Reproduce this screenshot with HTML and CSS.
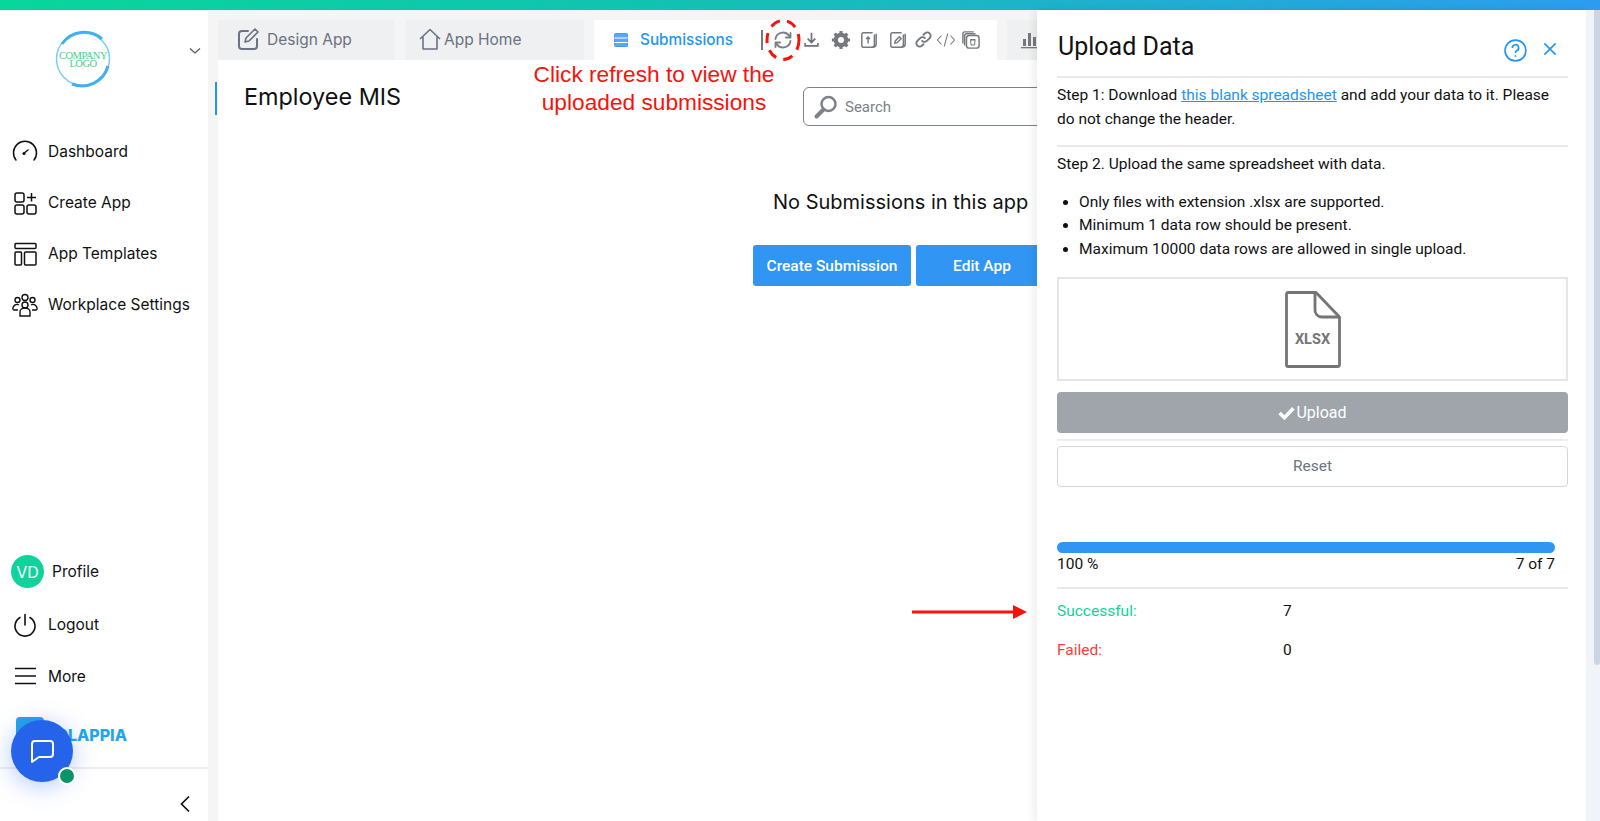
FILE: index.html
```html
<!DOCTYPE html>
<html lang="en">
<head>
<meta charset="utf-8">
<title>Employee MIS</title>
<link rel="stylesheet" href="styles.css">
</head>
<body>
<div class="topbar"></div>
<div class="shell">
  <aside class="sidebar">
    <div class="brand">
      <div class="logo">
        <svg width="58" height="58" viewBox="0 0 58 58"><circle cx="29" cy="29" r="26.500" fill="none" stroke="#7ccbf7" stroke-width="1.500"/><path d="M8 14A27 27 0 0 1 48 9M54 36A27 27 0 0 1 18 54" fill="none" stroke="#3fb0f2" stroke-width="3"/></svg>
        <span class="logo-text">COMPANY<br>LOGO</span>
      </div>
      <svg class="brand-caret" width="14" height="8" viewBox="0 0 14 8"><path d="M2 1.500L7 6L12 1.500" fill="none" stroke="#555" stroke-width="1.200"/></svg>
    </div>
    <nav class="nav">
      <a class="nav-item"><svg width="26" height="26" viewBox="0 0 26 26"><path d="M4 21A11.500 11.500 0 1 1 22 21M11.500 14.500L16 11" fill="none" stroke="#111" stroke-width="1.500" stroke-linecap="round"/><circle cx="12" cy="14.500" r="1.500" fill="#111"/></svg>Dashboard</a>
      <a class="nav-item"><svg width="26" height="26" viewBox="0 0 26 26" fill="none" stroke="#111" stroke-width="1.500"><rect x="3" y="3" width="9" height="9" rx="2"/><rect x="3" y="15" width="9" height="9" rx="2"/><rect x="15" y="15" width="9" height="9" rx="2"/><path d="M19.500 3V11.500M15 7.500H24"/></svg>Create App</a>
      <a class="nav-item"><svg width="26" height="26" viewBox="0 0 26 26" fill="none" stroke="#111" stroke-width="1.500"><rect x="3" y="2.500" width="21" height="5" rx="1"/><rect x="3" y="11" width="6.500" height="13" rx="1"/><rect x="12.500" y="11" width="11.500" height="13" rx="1"/></svg>App Templates</a>
      <a class="nav-item"><svg width="26" height="26" viewBox="0 0 26 26" fill="none" stroke="#111" stroke-width="1.400"><circle cx="13" cy="5.500" r="3"/><circle cx="5.500" cy="8" r="2.500"/><circle cx="20.500" cy="8" r="2.500"/><circle cx="13" cy="13" r="3"/><path d="M8 24V20a5 4 0 0 1 10 0V24ZM6 18H2a1 1 0 0 1-1-1 4 4 0 0 1 6-4M20 18H24a1 1 0 0 0 1-1 4 4 0 0 0-6-4"/></svg>Workplace Settings</a>
    </nav>
    <div class="side-bottom">
      <a class="nav-item profile"><span class="avatar">VD</span>Profile</a>
      <a class="nav-item logout"><svg width="26" height="26" viewBox="0 0 26 26" fill="none" stroke="#111" stroke-width="1.600" stroke-linecap="round"><path d="M13 2.500V13M8 5.500A10 10 0 1 0 18 5.500"/></svg>Logout</a>
      <a class="nav-item more"><svg width="26" height="26" viewBox="0 0 26 26" fill="none" stroke="#111" stroke-width="1.500"><path d="M3 5.500H24M3 13H24M3 20.500H24"/></svg>More</a>
      <div class="clappia"><span class="clappia-mark"></span><span class="clappia-word">CLAPPIA</span></div>
      <div class="collapse-row"><svg width="12" height="18" viewBox="0 0 12 18"><path d="M10 1.500L2.500 9L10 16.500" fill="none" stroke="#111" stroke-width="1.700"/></svg></div>
    </div>
  </aside>

  <main class="main">
    <div class="tabs">
      <div class="tab tab-off tab-design"><svg width="24" height="24" viewBox="0 0 24 24" fill="none" stroke="#6b7280" stroke-width="2" stroke-linecap="round" stroke-linejoin="round"><path d="M12 4H6a3 3 0 0 0-3 3V19a3 3 0 0 0 3 3H18a3 3 0 0 0 3-3V12"/><path d="M9 15L10 11L19 2L22 5L13 14Z" stroke-width="1.600"/></svg>Design App</div>
      <div class="tab tab-off tab-home"><svg width="24" height="24" viewBox="0 0 24 24" fill="none" stroke="#6b7280" stroke-width="1.600" stroke-linejoin="round"><path d="M2 12L12 2.500L22 12M5 10V22H19V10"/></svg>App Home</div>
      <div class="tab tab-on">
        <svg class="sub-icon" width="16" height="16" viewBox="0 0 16 16"><rect x="1.500" y="1.500" width="13" height="13" rx="1" fill="#5aa9f5" stroke="#3f9bf3"/><path d="M1 6H15M1 10.500H15" stroke="#fff" stroke-width="1"/></svg>
        <span class="tab-label">Submissions</span>
        <div class="tools">
          <span class="tool-sep"></span>
          <svg class="t-refresh" width="20" height="20" viewBox="0 0 24 24" fill="none" stroke="#7a7f85" stroke-width="2.200" stroke-linecap="round" stroke-linejoin="round"><path d="M3 11A9 9 0 0 1 19 6.500L21 9M21 3.500V9H15.500M21 13A9 9 0 0 1 5 17.500L3 15M3 20.500V15H8.500"/></svg>
          <svg class="t-dl" width="17" height="17" viewBox="0 0 20 20" fill="none" stroke="#6f7378" stroke-width="2"><path d="M10 2V13M5.500 9L10 13.500L14.500 9M2.500 14V17.500H17.500V14"/></svg>
          <svg class="t-gear" width="20" height="20" viewBox="0 0 22 22"><circle cx="11" cy="11" r="6" fill="none" stroke="#75797e" stroke-width="4"/><path d="M11 1V21M1 11H21M4 4L18 18M18 4L4 18" stroke="#75797e" stroke-width="3.400"/><circle cx="11" cy="11" r="3.300" fill="#fff"/></svg>
          <svg class="t-up" width="18" height="18" viewBox="0 0 20 20" fill="none" stroke="#74787d" stroke-width="1.600"><path d="M14 2H4A2 2 0 0 0 2 4V16A2 2 0 0 0 4 18H13A3 3 0 0 0 16 15V4M18 3V15A4 4 0 0 1 14 18"/><path d="M9 14V7M7 9L9 6.800L11 9"/></svg>
          <svg class="t-edit" width="18" height="18" viewBox="0 0 20 20" fill="none" stroke="#74787d" stroke-width="1.600"><path d="M14 2H4A2 2 0 0 0 2 4V16A2 2 0 0 0 4 18H13A3 3 0 0 0 16 15V4M18 3V15A4 4 0 0 1 14 18"/><path d="M6.500 13.500L7 11L11.500 6.500L13.500 8.500L9 13Z"/></svg>
          <svg class="t-link" width="19" height="19" viewBox="0 0 20 20" fill="none" stroke="#75797e" stroke-width="2" stroke-linecap="round"><path d="M8.500 11.500a3.500 3.500 0 0 0 5 0l3-3a3.500 3.500 0 0 0-5-5l-1.500 1.500M11.500 8.500a3.500 3.500 0 0 0-5 0l-3 3a3.500 3.500 0 0 0 5 5l1.500-1.500"/></svg>
          <svg class="t-code" width="20" height="18" viewBox="0 0 22 20" fill="none" stroke="#75797e" stroke-width="1.200"><path d="M6 5L1.500 10L6 15M16 5L20.500 10L16 15M13 3L9 17"/></svg>
          <svg class="t-trash" width="18" height="18" viewBox="0 0 20 20" fill="none" stroke="#74787d" stroke-width="1.600"><path d="M1 14V3A2 2 0 0 1 3 1H13"/><path d="M3 16V5A2 2 0 0 1 5 3H15"/><rect x="5" y="5" width="14" height="14" rx="3"/><path d="M9.500 10H14.500L14 15.500H10ZM9 9.500H15" stroke-width="1.100"/></svg>
        </div>
      </div>
      <div class="tab tab-off tab-chart"><svg width="18" height="18" viewBox="0 0 18 18" fill="#75797e"><rect x="2" y="8" width="3" height="7"/><rect x="7" y="2" width="3" height="13"/><rect x="12" y="6" width="3" height="9"/><rect x="0" y="16" width="18" height="1.300"/></svg></div>
    </div>

    <div class="page-head">
      <h1 class="app-title">Employee MIS</h1>
      <div class="search"><svg width="26" height="26" viewBox="0 0 26 26" fill="none" stroke="#7b8288"><circle cx="15.500" cy="10" r="7" stroke-width="2.500"/><path d="M10.500 15.500L3.500 22.500" stroke-width="4" stroke-linecap="round"/></svg><span>Search</span></div>
    </div>

    <div class="empty">
      <p class="empty-text">No Submissions in this app</p>
      <div class="empty-actions"><button class="btn-blue">Create Submission</button><button class="btn-blue btn-edit">Edit App</button></div>
    </div>
  </main>
</div>

<div class="note">Click refresh to view the<br>uploaded submissions</div>
<svg class="ring" width="36" height="42" viewBox="0 0 36 42"><ellipse cx="18" cy="21" rx="16" ry="19.500" fill="none" stroke="#f7130b" stroke-width="3" stroke-dasharray="10 7.500"/></svg>
<svg class="arrow" width="115" height="16" viewBox="0 0 115 16"><path d="M0 8H102" stroke="#f7130b" stroke-width="3"/><path d="M101 1L115 8L101 15Z" fill="#f7130b"/></svg>

<button class="chat"><svg width="28" height="28" viewBox="0 0 28 28" fill="none" stroke="#fff" stroke-width="2" stroke-linejoin="round"><path d="M7 4H22A3 3 0 0 1 25 7V17A3 3 0 0 1 22 20H11L4 25V7A3 3 0 0 1 7 4Z"/></svg><span class="chat-dot"></span></button>

<section class="drawer">
  <header class="drawer-head">
    <h2>Upload Data</h2>
    <div class="drawer-icons">
      <svg width="23" height="23" viewBox="0 0 22 22" fill="none" stroke="#2196f3" stroke-width="1.600"><circle cx="11" cy="11" r="10"/><path d="M8 8.500A3 3 0 1 1 12 11.300C11.200 11.800 11 12.300 11 13.300M11 15.500V17"/></svg>
      <svg class="icon-close" width="14" height="14" viewBox="0 0 15 15" fill="none" stroke="#2196f3" stroke-width="1.800"><path d="M1.500 1.500L13.500 13.500M13.500 1.500L1.500 13.500"/></svg>
    </div>
  </header>
  <div class="step step-1">Step 1: Download <a>this blank spreadsheet</a> and add your data to it. Please do not change the header.</div>
  <div class="step step-2">Step 2. Upload the same spreadsheet with data.</div>
  <ul class="rules">
    <li>Only files with extension .xlsx are supported.</li>
    <li>Minimum 1 data row should be present.</li>
    <li>Maximum 10000 data rows are allowed in single upload.</li>
  </ul>
  <div class="dropbox">
    <div class="file">
      <svg width="56" height="77" viewBox="0 0 56 77" fill="none" stroke="#757575" stroke-width="2.800" stroke-linejoin="round"><path d="M3 1.500H31L54.500 26V74A1.500 1.500 0 0 1 53 75.500H3A1.500 1.500 0 0 1 1.500 74V3A1.500 1.500 0 0 1 3 1.500Z"/><path d="M30 2V18A7 7 0 0 0 37 26H54"/></svg>
      <span class="file-ext">XLSX</span>
    </div>
  </div>
  <button class="btn-upload"><svg width="17" height="14" viewBox="0 0 16 13" fill="none" stroke="#fff" stroke-width="3.200"><path d="M1.500 6.500L6 11L14.500 2"/></svg>Upload</button>
  <div class="rule"></div>
  <button class="btn-reset">Reset</button>
  <div class="progress"></div>
  <div class="progress-labels"><span>100 %</span><span>7 of 7</span></div>
  <div class="result result-ok"><span class="result-key">Successful:</span><span>7</span></div>
  <div class="result result-bad"><span class="result-key">Failed:</span><span>0</span></div>
</section>
<div class="scrollbar"><div class="thumb"></div></div>
</body>
</html>
```

FILE: styles.css
```css
* { box-sizing: border-box; }
html, body { margin: 0; height: 821px; overflow: hidden; }
body { background: #f5f5f5; font-family: Inter, "Liberation Sans", sans-serif; color: #111; position: relative; }
h1, h2, p, ul { margin: 0; padding: 0; }
button { font: inherit; border: 0; padding: 0; }

.topbar { height: 10px; background: linear-gradient(90deg, #07d69a 0%, #14c0b4 45%, #2d9cf0 100%); }
.shell { display: flex; height: 811px; }

.sidebar { width: 208px; background: #fff; display: flex; flex-direction: column; flex: none; }
.brand { height: 102px; position: relative; padding: 20px 0 0 54px; }
.logo { width: 58px; height: 58px; position: relative; }
.logo svg { display: block; }
.logo-text { position: absolute; inset: 22px 0 0 0; text-align: center; font: 10.500px/8px "Liberation Serif", serif; color: #3fd08a; letter-spacing: -0.500px; }
.brand-caret { position: absolute; right: 6px; top: 37px; }
.nav { display: flex; flex-direction: column; padding-top: 14px; }
.nav-item { height: 51px; display: flex; align-items: center; gap: 10px; padding-left: 12px; font-size: 15.500px; color: #111; }
.side-bottom { margin-top: auto; display: flex; flex-direction: column; }
.profile { gap: 8px; padding-left: 11px; height: 52px; padding-bottom: 1px; }
.avatar { width: 33px; height: 33px; border-radius: 50%; background: #0fd39b; color: #fff; display: flex; align-items: center; justify-content: center; font-size: 16px; }
.logout { height: 53px; }
.more { height: 50px; }
.clappia { height: 68px; padding: 16px 0 0 16px; display: flex; align-items: flex-start; border-bottom: 2px solid #eee; }
.clappia-mark { width: 28px; height: 28px; border-radius: 4px; background: #26a3e8; }
.clappia-word { font-weight: 800; font-size: 16px; color: #1ea7ef; margin: 8px 0 0 12px; }
.collapse-row { height: 52px; display: flex; justify-content: flex-end; align-items: center; padding-right: 17px; padding-top: 18px; }

.main { margin-left: 10px; flex: 1; background: #fff; position: relative; }
.tabs { height: 50px; display: flex; background: #f5f5f5; padding-top: 10px; gap: 10px; }
.tab { height: 40px; display: flex; align-items: center; font-size: 15.500px; }
.tab-off { background: #eff0f2; color: #6b7280; }
.tab-design { width: 177px; gap: 7px; padding-left: 18px; padding-bottom: 2px; }
.tab-home { width: 179px; gap: 2px; padding-left: 13px; padding-bottom: 2px; }
.tab-on { width: 403px; background: #fff; color: #2196f3; padding-left: 19px; padding-bottom: 1px; font-size: 15.300px; font-weight: 500; }
.tab-label { margin-left: 11px; width: 121px; flex: none; }
.tab-chart { width: 60px; padding-left: 14px; }
.sub-icon { flex: none; }
.tools { display: flex; align-items: center; }
.tool-sep { width: 2px; height: 20px; background: #777; margin-right: 10px; }
.t-refresh { margin-right: 10px; }
.t-dl { margin-right: 11px; }
.t-gear { margin-right: 9px; }
.t-up { margin-right: 11px; }
.t-edit { margin-right: 7px; }
.t-link { margin-right: 3px; }
.t-code { margin-right: 6px; }

.page-head { height: 80px; position: relative; padding: 22px 0 0 26px; }
.page-head::before { content: ""; position: absolute; left: -3px; top: 22px; width: 2px; height: 33px; background: #2196f3; }
.app-title { font-size: 23.400px; font-weight: 400; line-height: 30px; }
.search { position: absolute; left: 585px; top: 27px; width: 300px; height: 39px; border: 1px solid #7b8288; border-radius: 6px; display: flex; align-items: center; gap: 6px; padding-left: 9px; font: 15px Roboto, sans-serif; color: #7b8288; }
.empty { position: absolute; left: 535px; top: 180px; }
.empty-text { font-size: 20px; line-height: 24px; margin-bottom: 31px; padding-left: 20px; }
.empty-actions { display: flex; gap: 5px; }
.btn-blue { width: 158px; height: 41px; background: #3196f3; color: #fff; border-radius: 3px; font: 500 15.500px Roboto, sans-serif; }
.btn-edit { width: 132px; }

.note { position: absolute; left: 501px; top: 61px; width: 306px; text-align: center; color: #f7130b; font: 22.700px/27.500px "Liberation Sans", Arial, sans-serif; }
.ring { position: absolute; left: 765px; top: 19px; }
.arrow { position: absolute; left: 912px; top: 604px; }

.chat { position: absolute; left: 11px; top: 720px; width: 62px; height: 62px; border-radius: 50%; background: #2563eb; box-shadow: 0 4px 24px rgba(37, 99, 235, .35); display: flex; align-items: center; justify-content: center; }
.chat-dot { position: absolute; right: -3px; bottom: -3px; width: 18px; height: 18px; border-radius: 50%; background: #0b9468; border: 2px solid #fff; }

.drawer { position: absolute; left: 1037px; top: 10px; width: 549px; height: 811px; background: #fff; box-shadow: -3px 0 8px rgba(0, 0, 0, .08); padding: 0 18px 0 20px; font: 15.500px/23.500px Roboto, sans-serif; color: #111; }
.drawer-head { height: 68px; padding-top: 22px; display: flex; justify-content: space-between; border-bottom: 2px solid #e9e9e9; }
.drawer-head h2 { font-size: 25px; font-weight: 400; line-height: 30px; padding-left: 1px; }
.drawer-icons { display: flex; align-items: flex-start; gap: 16px; padding-right: 11px; margin-top: 7px; }
.icon-close { margin-top: 3px; }
.step-1 { padding: 6px 0 14px; border-bottom: 2px solid #e9e9e9; }
.step-1 a { color: #2196f3; text-decoration: underline; }
.step-2 { padding-top: 6px; }
.rules { padding: 14px 0 0 22px; }
.dropbox { margin-top: 16px; height: 104px; border: 2px solid #e6e6e6; display: flex; justify-content: center; align-items: center; }
.file { position: relative; width: 56px; height: 77px; }
.file svg { display: block; }
.file-ext { position: absolute; left: 0; right: 0; top: 40px; text-align: center; font: 700 14.500px/18px Roboto, sans-serif; color: #757575; }
.btn-upload { display: flex; width: 100%; height: 41px; margin-top: 11px; background: #a0a5ab; color: #fff; border-radius: 4px; align-items: center; justify-content: center; font-size: 16px; }
.btn-upload svg { margin-right: 1px; }
.rule { height: 2px; margin-top: 6px; background: #ededed; }
.btn-reset { display: block; width: 100%; height: 41px; margin-top: 5px; background: #fff; border: 1px solid #d5d7d9; border-radius: 4px; color: #6c757d; font-size: 15.500px; }
.progress { margin: 55px 13px 0 0; height: 11px; border-radius: 6px; background: #3196f3; }
.progress-labels { display: flex; justify-content: space-between; padding: 0 13px 0 0; line-height: 23.500px; height: 36px; position: relative; }
.progress-labels::after { content: ""; position: absolute; left: 0; right: 0; bottom: 0; height: 2px; background: #e9e9e9; }
.result { display: flex; height: 39px; align-items: center; }
.result-ok { margin-top: 3px; }
.result-key { width: 226px; }
.result-ok .result-key { color: #0fd39b; }
.result-bad .result-key { color: #f44336; }

.scrollbar { position: absolute; left: 1586px; top: 10px; width: 14px; height: 811px; background: #f0f3f7; }
.thumb { height: 655px; margin-left: 8px; width: 6px; background: #ccd6e2; border-radius: 0 0 4px 4px; }
```
